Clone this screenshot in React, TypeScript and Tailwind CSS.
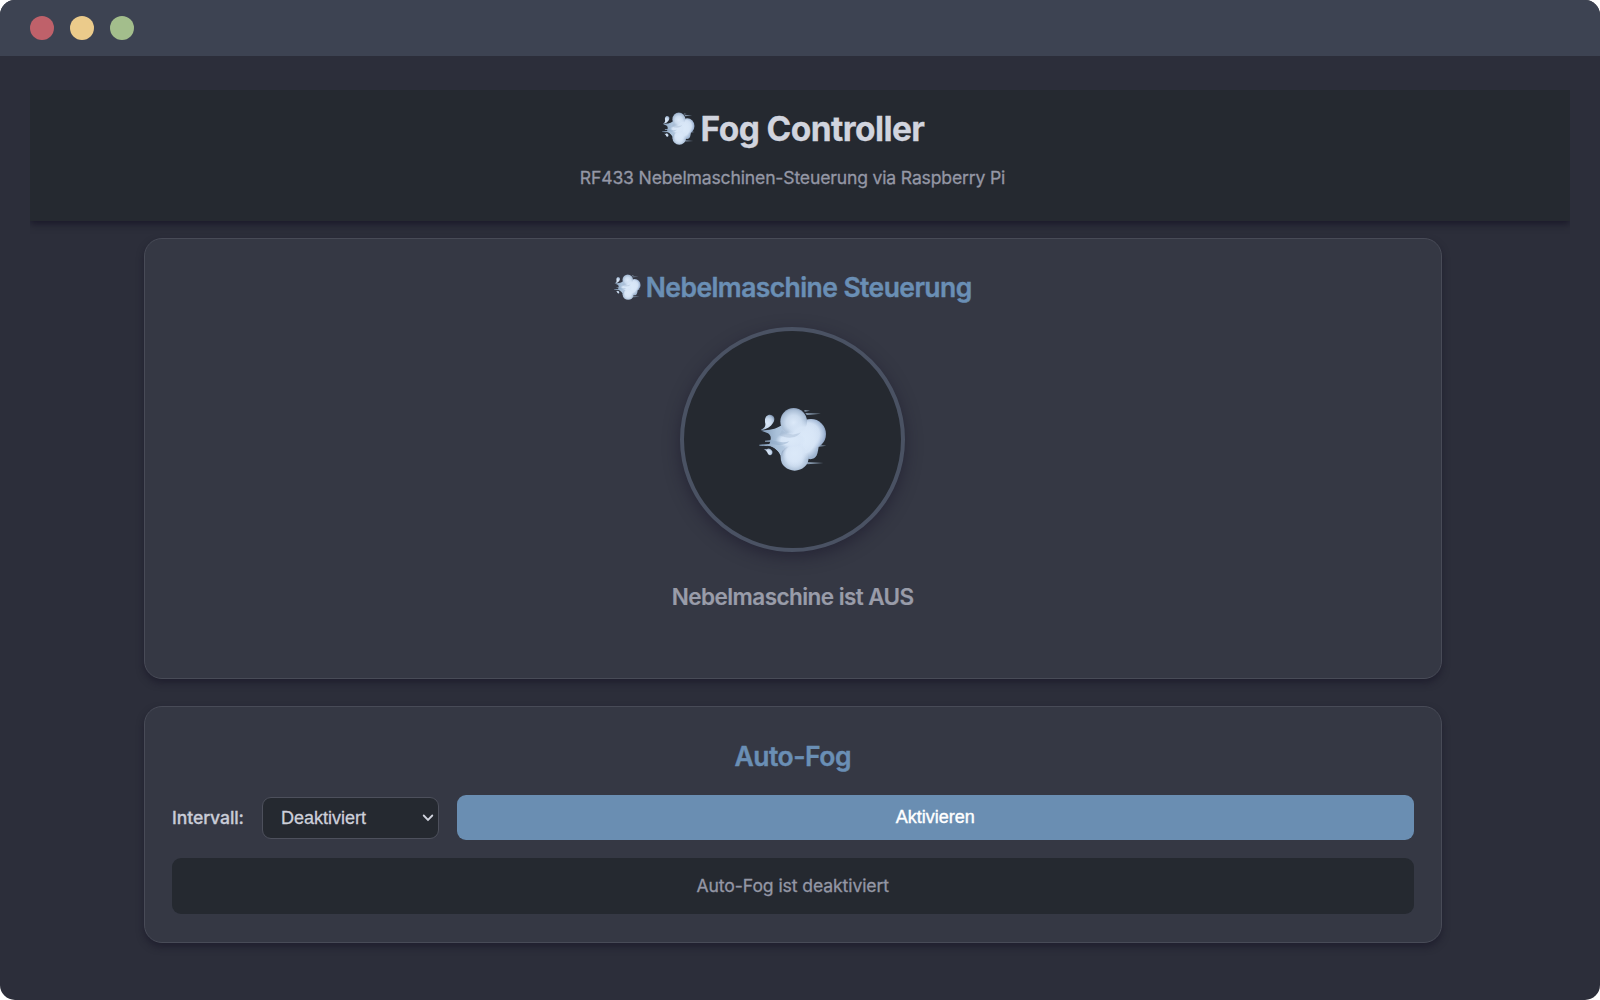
function Fog({ id, className }: { id: string; className: string }) {
  const puff = `url(#${id}-puff)`;
  const body = `url(#${id}-body)`;
  const core = `url(#${id}-core)`;
  return (
    <svg viewBox="57 51 204 192" className={className} preserveAspectRatio="none" aria-hidden="true">
      <defs>
        <radialGradient id={`${id}-puff`} cx="0.5" cy="0.55" r="0.56">
          <stop offset="0" stopColor="#dce9f9" />
          <stop offset="0.5" stopColor="#cbdbee" />
          <stop offset="0.85" stopColor="#a9bdd5" />
          <stop offset="1" stopColor="#8599b5" />
        </radialGradient>
        <radialGradient id={`${id}-body`} cx="0.42" cy="0.5" r="0.6">
          <stop offset="0" stopColor="#deebfa" />
          <stop offset="0.6" stopColor="#d0dff2" />
          <stop offset="0.86" stopColor="#a5bad7" />
          <stop offset="1" stopColor="#8094b3" />
        </radialGradient>
        <radialGradient id={`${id}-core`}>
          <stop offset="0" stopColor="#dbe9f9" />
          <stop offset="0.65" stopColor="#d8e6f7" stopOpacity="0.95" />
          <stop offset="1" stopColor="#d3e2f5" stopOpacity="0" />
        </radialGradient>
        <linearGradient id={`${id}-tail`} x1="0" x2="1" y1="0" y2="0">
          <stop offset="0" stopColor="#7f98b5" />
          <stop offset="0.35" stopColor="#a9c0d9" />
          <stop offset="1" stopColor="#d0e0f3" />
        </linearGradient>
      </defs>
      <g fill="#8799ae">
        <path d="M193 60 210 62 194 65Z" />
        <path d="M196 69 243 71 200 75Z" />
        <path d="M235 165 259 167 237 170Z" />
        <path d="M200 216 250 219 202 223Z" />
      </g>
      <path d="M196 165H236C235 178 234 186 230 196C223 209 209 211 196 202Z" fill="#9fb5d0" />
      <path
        d="M64 122C85 119 105 120 126 105L150 105C190 105 205 120 205 145C205 190 190 210 160 218L124 205C119 187 110 177 90 169L58 167V164L88 162L91 155L75 155V152L91 151C94 142 92 136 84 130Z"
        fill={`url(#${id}-tail)`}
      />
      <circle cx="213" cy="132" r="45" fill={body} />
      <ellipse cx="164" cy="203" rx="42" ry="39" fill={puff} />
      <circle cx="161" cy="94" r="40" fill={puff} />
      <ellipse cx="190" cy="150" rx="52" ry="60" fill={core} />
      <ellipse cx="163" cy="190" rx="36" ry="38" fill={core} />
      <ellipse cx="152" cy="150" rx="45" ry="24" fill={core} />
      <path d="M126 120C140 135 165 137 182 127C172 145 143 148 118 136Z" fill="#9fb4ce" opacity="0.4" />
      <path d="M92 150C112 155 130 160 148 154C134 168 112 168 90 159Z" fill="#8fa8c6" opacity="0.45" />
      <path d="M63 119C72 115 77 110 76 101C72 84 79 74 90 74C103 75 107 88 99 99C92 110 80 118 63 121Z" fill={puff} />
      <path d="M81 178C83 173 93 175 97 184C99 192 94 198 88 195C82 193 84 184 71 177Z" fill={puff} />
      <path d="M82 169C103 172 113 182 120 198" fill="none" stroke="#25292f" strokeWidth="2.500" />
    </svg>
  );
}

const card =
  "flex flex-col items-center rounded-[18px] border border-[#484b57] bg-[#353844] shadow-[0_4px_7px_rgba(20,18,36,0.5)]";

export default function App() {
  return (
    <div className="h-[1000px] w-[1600px] bg-white font-['Inter',sans-serif]">
      <div className="flex h-full flex-col overflow-hidden rounded-[15px] bg-[#2c2e3a]">
        <div className="flex h-14 shrink-0 items-center gap-4 bg-[#3d4352] px-[30px]">
          <span className="size-6 rounded-full bg-[#bf616a]" />
          <span className="size-6 rounded-full bg-[#ebcb8b]" />
          <span className="size-6 rounded-full bg-[#a3be8c]" />
        </div>

        <div className="mx-[30px] mt-[34px] h-[147.5px] overflow-hidden">
          <header className="flex h-[131px] flex-col items-center bg-[#252930] pr-[15px] pt-[15px] shadow-[0_3px_7px_rgba(20,18,36,0.75)]">
            <h1 className="ml-px flex h-12 items-center whitespace-nowrap text-[33.5px] font-bold tracking-[-0.58px] text-[#d1d4de] [-webkit-text-stroke:0.3px_#d1d4de]">
              <Fog id="fog-title" className="mb-[2px] mr-[6px] h-[33px] w-[33px]" />
              Fog Controller
            </h1>
            <p className="mt-[11px] whitespace-nowrap text-[17.6px] leading-7 tracking-[-0.17px] text-[#9497a5] [-webkit-text-stroke:0.3px_#9497a5]">
              RF433 Nebelmaschinen-Steuerung via Raspberry Pi
            </p>
          </header>
        </div>

        <main className="ml-[144px] flex w-[1297.5px] flex-col">
          <section className={`${card} h-[441.5px]`}>
            <h2 className="mt-[29.5px] flex h-10 items-center whitespace-nowrap text-[26.5px] font-semibold tracking-[-0.58px] text-[#6a8fb5] [-webkit-text-stroke:0.4px_#6a8fb5]">
              <Fog id="fog-heading" className="mb-[2px] mr-[5px] h-[26px] w-[27px]" />
              Nebelmaschine Steuerung
            </h2>
            <button className="mt-[19px] flex size-[225px] items-center justify-center rounded-full border-[4.5px] border-[#4a5263] bg-[#252930] pb-px shadow-[0_5px_16px_rgba(25,22,42,0.55)]">
              <Fog id="fog-button" className="h-[64px] w-[68px]" />
            </button>
            <p className="mt-[29px] whitespace-nowrap text-[22.5px] font-semibold leading-8 tracking-[-0.56px] text-[#999ca9] [-webkit-text-stroke:0.2px_#999ca9]">
              Nebelmaschine ist AUS
            </p>
          </section>

          <section className={`${card} mt-[27px] h-[237px] px-[27px]`}>
            <h2 className="mt-[30px] flex h-10 items-center whitespace-nowrap text-[26.5px] font-semibold tracking-[-0.5px] text-[#6a8fb5] [-webkit-text-stroke:0.4px_#6a8fb5]">
              Auto-Fog
            </h2>
            <div className="mt-[18px] flex w-full items-center">
              <label className="w-[90px] pt-px text-[17.6px] font-medium tracking-[-0.1px] text-[#c9ccd7] [-webkit-text-stroke:0.3px_#c9ccd7]">
                Intervall:
              </label>
              <div className="mt-px flex h-[42px] w-[177px] items-center justify-between rounded-[9px] border border-[#4d505c] bg-[#252930] pl-[18px] pr-1 font-['Liberation_Sans',sans-serif] text-[18px] text-[#cdd0da] [-webkit-text-stroke:0.3px_#cdd0da]">
                Deaktiviert
                <svg viewBox="0 0 12 8" className="h-2 w-3" fill="none" stroke="#d1d4de" strokeWidth="1.8">
                  <path d="M1.700 1.500 6 5.900 10.300 1.500" strokeLinecap="round" />
                </svg>
              </div>
              <button className="ml-[18px] h-[45px] flex-1 rounded-[9px] bg-[#6a8eb2] pb-px font-['Liberation_Sans',sans-serif] text-[18px] text-white [-webkit-text-stroke:0.4px_white]">
                Aktivieren
              </button>
            </div>
            <div className="mt-[18px] flex h-[56px] w-full items-center justify-center rounded-[9px] bg-[#252930] pt-px text-[17.6px] tracking-[-0.1px] text-[#9497a5] [-webkit-text-stroke:0.3px_#9497a5]">
              Auto-Fog ist deaktiviert
            </div>
          </section>
        </main>
      </div>
    </div>
  );
}
